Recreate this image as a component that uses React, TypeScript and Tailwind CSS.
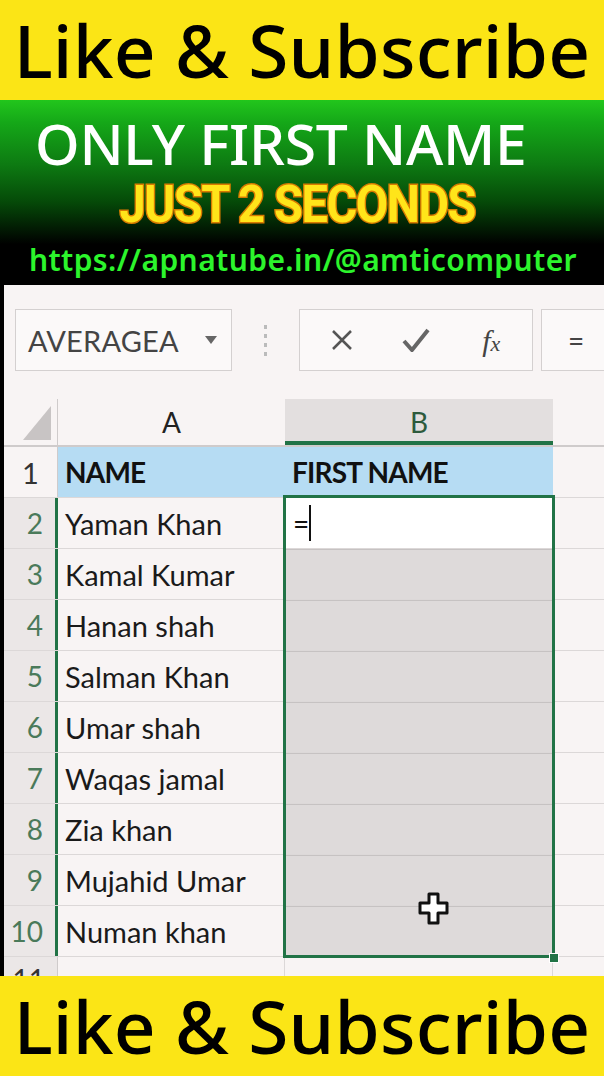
import React from 'react'

const rows = [
  'Yaman Khan',
  'Kamal Kumar',
  'Hanan shah',
  'Salman Khan',
  'Umar shah',
  'Waqas jamal',
  'Zia khan',
  'Mujahid Umar',
  'Numan khan',
]

function LikeBar() {
  return (
    <div className="h-[100px] bg-[#fbe516] flex items-center justify-center">
      <span className="font-['Noto_Sans',sans-serif] font-medium text-[73px] leading-[80px] text-black tracking-[0.2px]">
        Like &amp; Subscribe
      </span>
    </div>
  )
}

function Cursor() {
  return (
    <svg width="34" height="36" viewBox="0 0 34 36">
      <path
        d="M11 3h9v9h9v10h-9v10h-9V22H2V12h9z"
        fill="#fff"
        stroke="#111"
        strokeWidth="3"
        strokeLinejoin="round"
      />
    </svg>
  )
}

export default function App() {
  return (
    <div className="w-[604px] h-[1076px] overflow-hidden bg-black flex flex-col font-['Lato',sans-serif]">
      <div className="h-[2px] bg-[#4caf20] flex">
        <div className="ml-[140px] w-[128px] bg-white" />
      </div>
      <div className="-mt-[2px]">
        <LikeBar />
      </div>

      {/* title block */}
      <div className="h-[186px] bg-[linear-gradient(180deg,#22c61c_0%,#15a818_12%,#0d7a12_35%,#054a08_55%,#000_78%)] flex flex-col">
        <div className="pl-[35px] pt-[15px] font-['Noto_Sans',sans-serif] font-medium text-[57px] leading-[56px] text-white tracking-[-0.3px]">
          ONLY FIRST NAME
        </div>
        <div className="flex justify-center pr-[10px] mt-[12px]">
          <span className="font-['Roboto',sans-serif] font-bold text-[51px] leading-[44px] text-[#ffe51a] tracking-[-1.5px] scale-x-[0.92] [-webkit-text-stroke:3px_#d77a00] [paint-order:stroke_fill]">
            JUST 2 SECONDS
          </span>
        </div>
        <div className="mt-[15px] text-center font-['Noto_Sans',sans-serif] font-semibold text-[30px] leading-[36px] text-[#2cf52c] tracking-[0.4px] pl-[2px]">
          https://apnatube.in/@amticomputer
        </div>
      </div>

      {/* excel */}
      <div className="h-[691px] pl-[4px] flex">
        <div className="flex-1 bg-[#f8f4f4] flex flex-col overflow-hidden">
          <div className="pt-[24px] pl-[11px] flex items-center h-[86px]">
            <div className="w-[217px] h-[62px] border border-[#d4d0d0] bg-[#fbf9f9] flex items-center pl-[12px] pr-[14px]">
              <span className="text-[29px] text-[#444] tracking-[0.2px] font-['Lato',sans-serif] flex-1">AVERAGEA</span>
              <svg width="12" height="8" viewBox="0 0 12 8"><path d="M0 0h12L6 8z" fill="#666" /></svg>
            </div>
            <div className="w-[67px] flex flex-col items-center gap-[5px]">
              <span className="w-[3px] h-[4px] bg-[#bbb]" />
              <span className="w-[3px] h-[4px] bg-[#bbb]" />
              <span className="w-[3px] h-[4px] bg-[#bbb]" />
              <span className="w-[3px] h-[4px] bg-[#bbb]" />
            </div>
            <div className="w-[234px] h-[62px] border border-[#d4d0d0] bg-[#fbf9f9] flex items-center">
              <div className="w-[78px] flex justify-center pl-[6px]">
                <svg width="22" height="22" viewBox="0 0 22 22"><path d="M2 2l18 18M20 2L2 20" stroke="#555" strokeWidth="2.5" /></svg>
              </div>
              <div className="w-[78px] flex justify-center">
                <svg width="28" height="24" viewBox="0 0 28 24"><path d="M2 13l8 9L26 2" stroke="#666" strokeWidth="4" fill="none" /></svg>
              </div>
              <div className="w-[78px] flex justify-center pr-[4px]">
                <span className="font-['Liberation_Serif',serif] italic text-[30px] text-[#444]">
                  f<span className="text-[22px]">x</span>
                </span>
              </div>
            </div>
            <div className="ml-[8px] flex-1 h-[62px] border border-[#d4d0d0] border-r-0 bg-[#fbf9f9] flex items-center pl-[26px]">
              <span className="text-[28px] text-[#444]">=</span>
            </div>
          </div>

          {/* column headers */}
          <div className="mt-[28px] h-[48px] flex border-b-2 border-[#cfcbcb]">
            <div className="w-[54px] flex items-end justify-end pr-[6px] pb-[5px] border-r border-[#cfcbcb]">
              <svg width="28" height="34" viewBox="0 0 28 34"><path d="M28 0v34H0z" fill="#c8c4c4" /></svg>
            </div>
            <div className="w-[227px] flex items-center justify-center text-[28px] text-[#222]">A</div>
            <div className="w-[268px] bg-[#e3dfdf] border-b-[4px] border-[#217346] flex items-center justify-center text-[28px] text-[#2d5a3c] pt-[3px]">
              B
            </div>
            <div className="flex-1" />
          </div>

          {/* rows */}
          <div className="relative flex flex-col">
            <div className="h-[51px] flex border-b border-[#dcd8d8]">
              <div className="w-[54px] flex items-center justify-center text-[29px] text-[#333] border-r border-[#cfcbcb]">1</div>
              <div className="w-[495px] bg-[#b6dcf3] flex items-center">
                <span className="w-[227px] pl-[7px] font-bold text-[28px] text-[#111] tracking-[-0.8px]">NAME</span>
                <span className="pl-[7px] font-bold text-[28px] text-[#111] tracking-[-0.8px]">FIRST NAME</span>
              </div>
              <div className="flex-1" />
            </div>
            {rows.map((name, i) => (
              <div key={name} className="h-[51px] flex border-b border-[#dcd8d8]">
                <div className="w-[54px] flex items-center justify-end pr-[12px] text-[28px] text-[#4a7a5a] bg-[#ebe7e7] border-r-[3px] border-[#217346]">
                  {i + 2}
                </div>
                <div className="w-[227px] pl-[7px] flex items-center text-[29px] text-[#1a1a1a] border-r border-[#dcd8d8]">
                  {name}
                </div>
                <div
                  className={
                    i === 0
                      ? 'w-[268px] bg-white flex items-center pl-[8px]'
                      : 'w-[268px] bg-[#dedada] border-t border-[#c6c2c2]'
                  }
                >
                  {i === 0 && (
                    <>
                      <span className="text-[28px] text-[#111]">=</span>
                      <span className="w-[2px] h-[36px] bg-[#111]" />
                    </>
                  )}
                </div>
                <div className="flex-1" />
              </div>
            ))}
            <div className="h-[19px] flex overflow-hidden">
              <div className="w-[54px] flex justify-end pr-[12px] pt-[8px] text-[28px] leading-none text-[#333] bg-[#ebe7e7] border-r border-[#cfcbcb] overflow-hidden">
                11
              </div>
              <div className="w-[227px] border-r border-[#dcd8d8]" />
              <div className="w-[268px] border-r border-[#dcd8d8]" />
            </div>

            {/* selection overlay */}
            <div className="absolute left-[279px] top-[48px] w-[272px] h-[463px] border-[3px] border-[#217346] pointer-events-none" />
            <div className="absolute left-[545px] top-[506px] w-[10px] h-[10px] bg-[#217346] border border-white" />
            <div className="absolute left-[414px] top-[444px]">
              <Cursor />
            </div>
          </div>
        </div>
      </div>

      <LikeBar />
    </div>
  )
}
